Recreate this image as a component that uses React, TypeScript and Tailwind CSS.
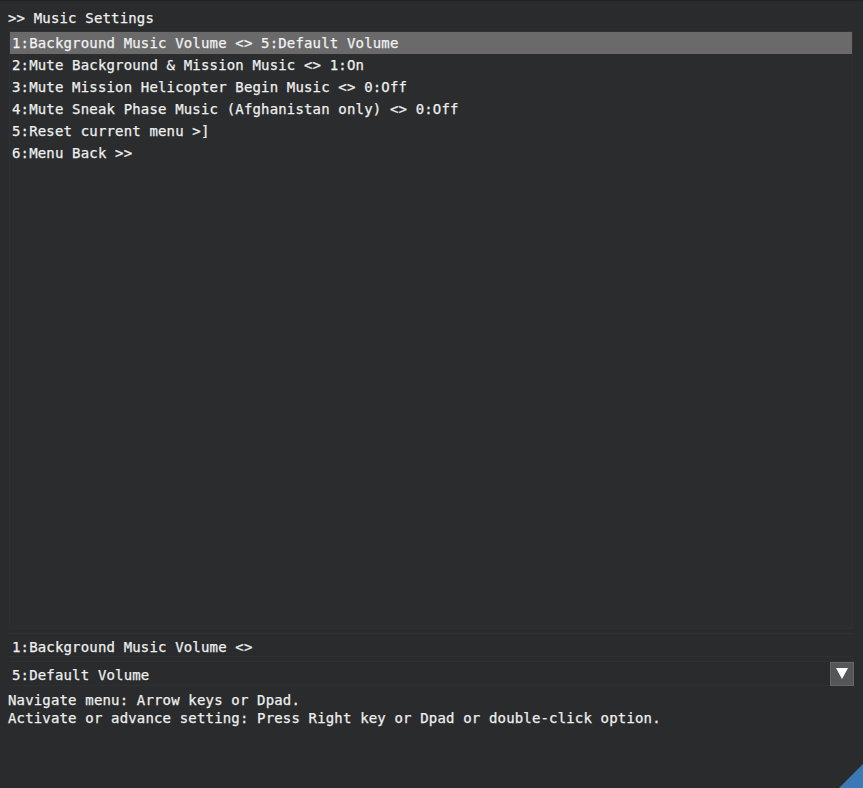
import React from "react";

const rows = [
  "1:Background Music Volume <> 5:Default Volume",
  "2:Mute Background & Mission Music <> 1:On",
  "3:Mute Mission Helicopter Begin Music <> 0:Off",
  "4:Mute Sneak Phase Music (Afghanistan only) <> 0:Off",
  "5:Reset current menu >]",
  "6:Menu Back >>",
];

export default function App() {
  return (
    <div
      className="relative w-[863px] h-[788px] overflow-hidden bg-[#292b2c] text-[#efefef] text-[14px] tracking-[0.16px] [-webkit-text-stroke:0.25px_#efefef] flex flex-col border-t border-[#1e2021]"
      style={{ fontFamily: '"DejaVu Sans Mono", "Liberation Mono", monospace' }}
    >
      <div className="h-[30px] flex items-center pl-[8px] pt-[4px] leading-[18px]">
        {">> Music Settings"}
      </div>
      <div className="ml-[9px] mr-[10px] h-[598px] border border-[#2e3031] bg-[#2a2c2d] flex flex-col">
        {rows.map((r, i) => (
          <div
            key={i}
            className={
              "h-[22px] flex items-center pl-[2px] whitespace-pre " +
              (i === 0 ? "bg-[#6a6a6a] text-[#f4f4f4]" : "")
            }
          >
            {r}
          </div>
        ))}
      </div>
      <div className="mt-[4px] ml-[9px] mr-[10px] h-[24px] border-y border-[#2e3031] flex items-center pl-[3px] pt-[4px]">
        1:Background Music Volume {"<>"}
      </div>
      <div className="mt-[4px] ml-[9px] mr-[9px] h-[25px] border-y border-[#2e3031] flex items-center justify-between pl-[3px]">
        <span className="pt-[3px]">5:Default Volume</span>
        <div className="w-[24px] h-[24px] bg-[#555657] border border-[#666] flex items-center justify-center">
          <svg width="12" height="11" viewBox="0 0 12 11">
            <polygon points="0,0 12,0 6,11" fill="#ffffff" />
          </svg>
        </div>
      </div>
      <div className="pl-[8px] pt-[5px] leading-[18px] whitespace-pre">
        <div>Navigate menu: Arrow keys or Dpad.</div>
        <div>Activate or advance setting: Press Right key or Dpad or double-click option.</div>
      </div>
      <div className="absolute right-0 bottom-0 w-[24px] h-[24px]">
        <svg width="24" height="24" viewBox="0 0 24 24">
          <polygon points="24,0 24,24 0,24" fill="#3b78b4" />
        </svg>
      </div>
    </div>
  );
}
